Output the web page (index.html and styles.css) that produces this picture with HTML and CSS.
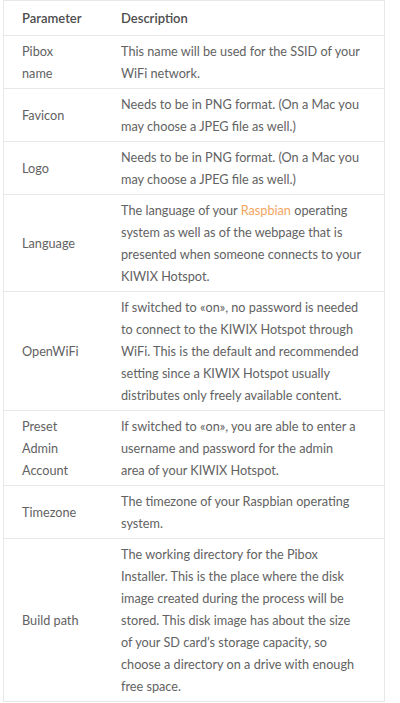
FILE: index.html
```html
<!DOCTYPE html>
<html lang="en">
<head>
<meta charset="utf-8">
<title>Pibox Parameters</title>
<link rel="stylesheet" href="styles.css">
</head>
<body>
<table class="params">
  <thead>
    <tr><th class="col-param">Parameter</th><th class="col-desc">Description</th></tr>
  </thead>
  <tbody>
    <tr><td>Pibox name</td><td>This name will be used for the SSID of your<br>WiFi network.</td></tr>
    <tr><td>Favicon</td><td>Needs to be in PNG format. (On a Mac you<br>may choose a JPEG file as well.)</td></tr>
    <tr><td>Logo</td><td>Needs to be in PNG format. (On a Mac you<br>may choose a JPEG file as well.)</td></tr>
    <tr><td>Language</td><td>The language of your <a class="link" href="#">Raspbian</a> operating<br>system as well as of the webpage that is<br>presented when someone connects to your<br>KIWIX Hotspot.</td></tr>
    <tr><td>OpenWiFi</td><td>If switched to «on», no password is needed<br>to connect to the KIWIX Hotspot through<br>WiFi. This is the default and recommended<br>setting since a KIWIX Hotspot usually<br>distributes only freely available content.</td></tr>
    <tr><td>Preset Admin Account</td><td>If switched to «on», you are able to enter a<br>username and password for the admin<br>area of your KIWIX Hotspot.</td></tr>
    <tr><td>Timezone</td><td>The timezone of your Raspbian operating<br>system.</td></tr>
    <tr><td>Build path</td><td>The working directory for the Pibox<br>Installer. This is the place where the disk<br>image created during the process will be<br>stored. This disk image has about the size<br>of your SD card’s storage capacity, so<br>choose a directory on a drive with enough<br>free space.</td></tr>
  </tbody>
</table>
</body>
</html>
```
FILE: styles.css
```css
html, body {
  margin: 0;
  padding: 0;
  background: #ffffff;
}
body {
  font-family: "Lato", "Open Sans", sans-serif;
  font-size: 12.7px;
  color: #626262;
}
.params {
  margin: 0 0 0 3px;
  width: 382px;
  border-collapse: collapse;
  border: 1px solid #e8e8e8;
  table-layout: fixed;
}
.params th,
.params td {
  border-top: 1px solid #e8e8e8;
  padding: 4px 8px 4px 18px;
  line-height: 22px;
  text-align: left;
  vertical-align: middle;
}
.params th:first-child,
.params td:first-child {
  padding-right: 22px;
}
.params th {
  padding-top: 6px;
  padding-bottom: 6px;
  color: #4d4d4d;
  font-weight: 600;
  font-size: 13px;
}
.col-param {
  width: 59px;
}
.link {
  color: #f2a561;
  text-decoration: none;
}
```
